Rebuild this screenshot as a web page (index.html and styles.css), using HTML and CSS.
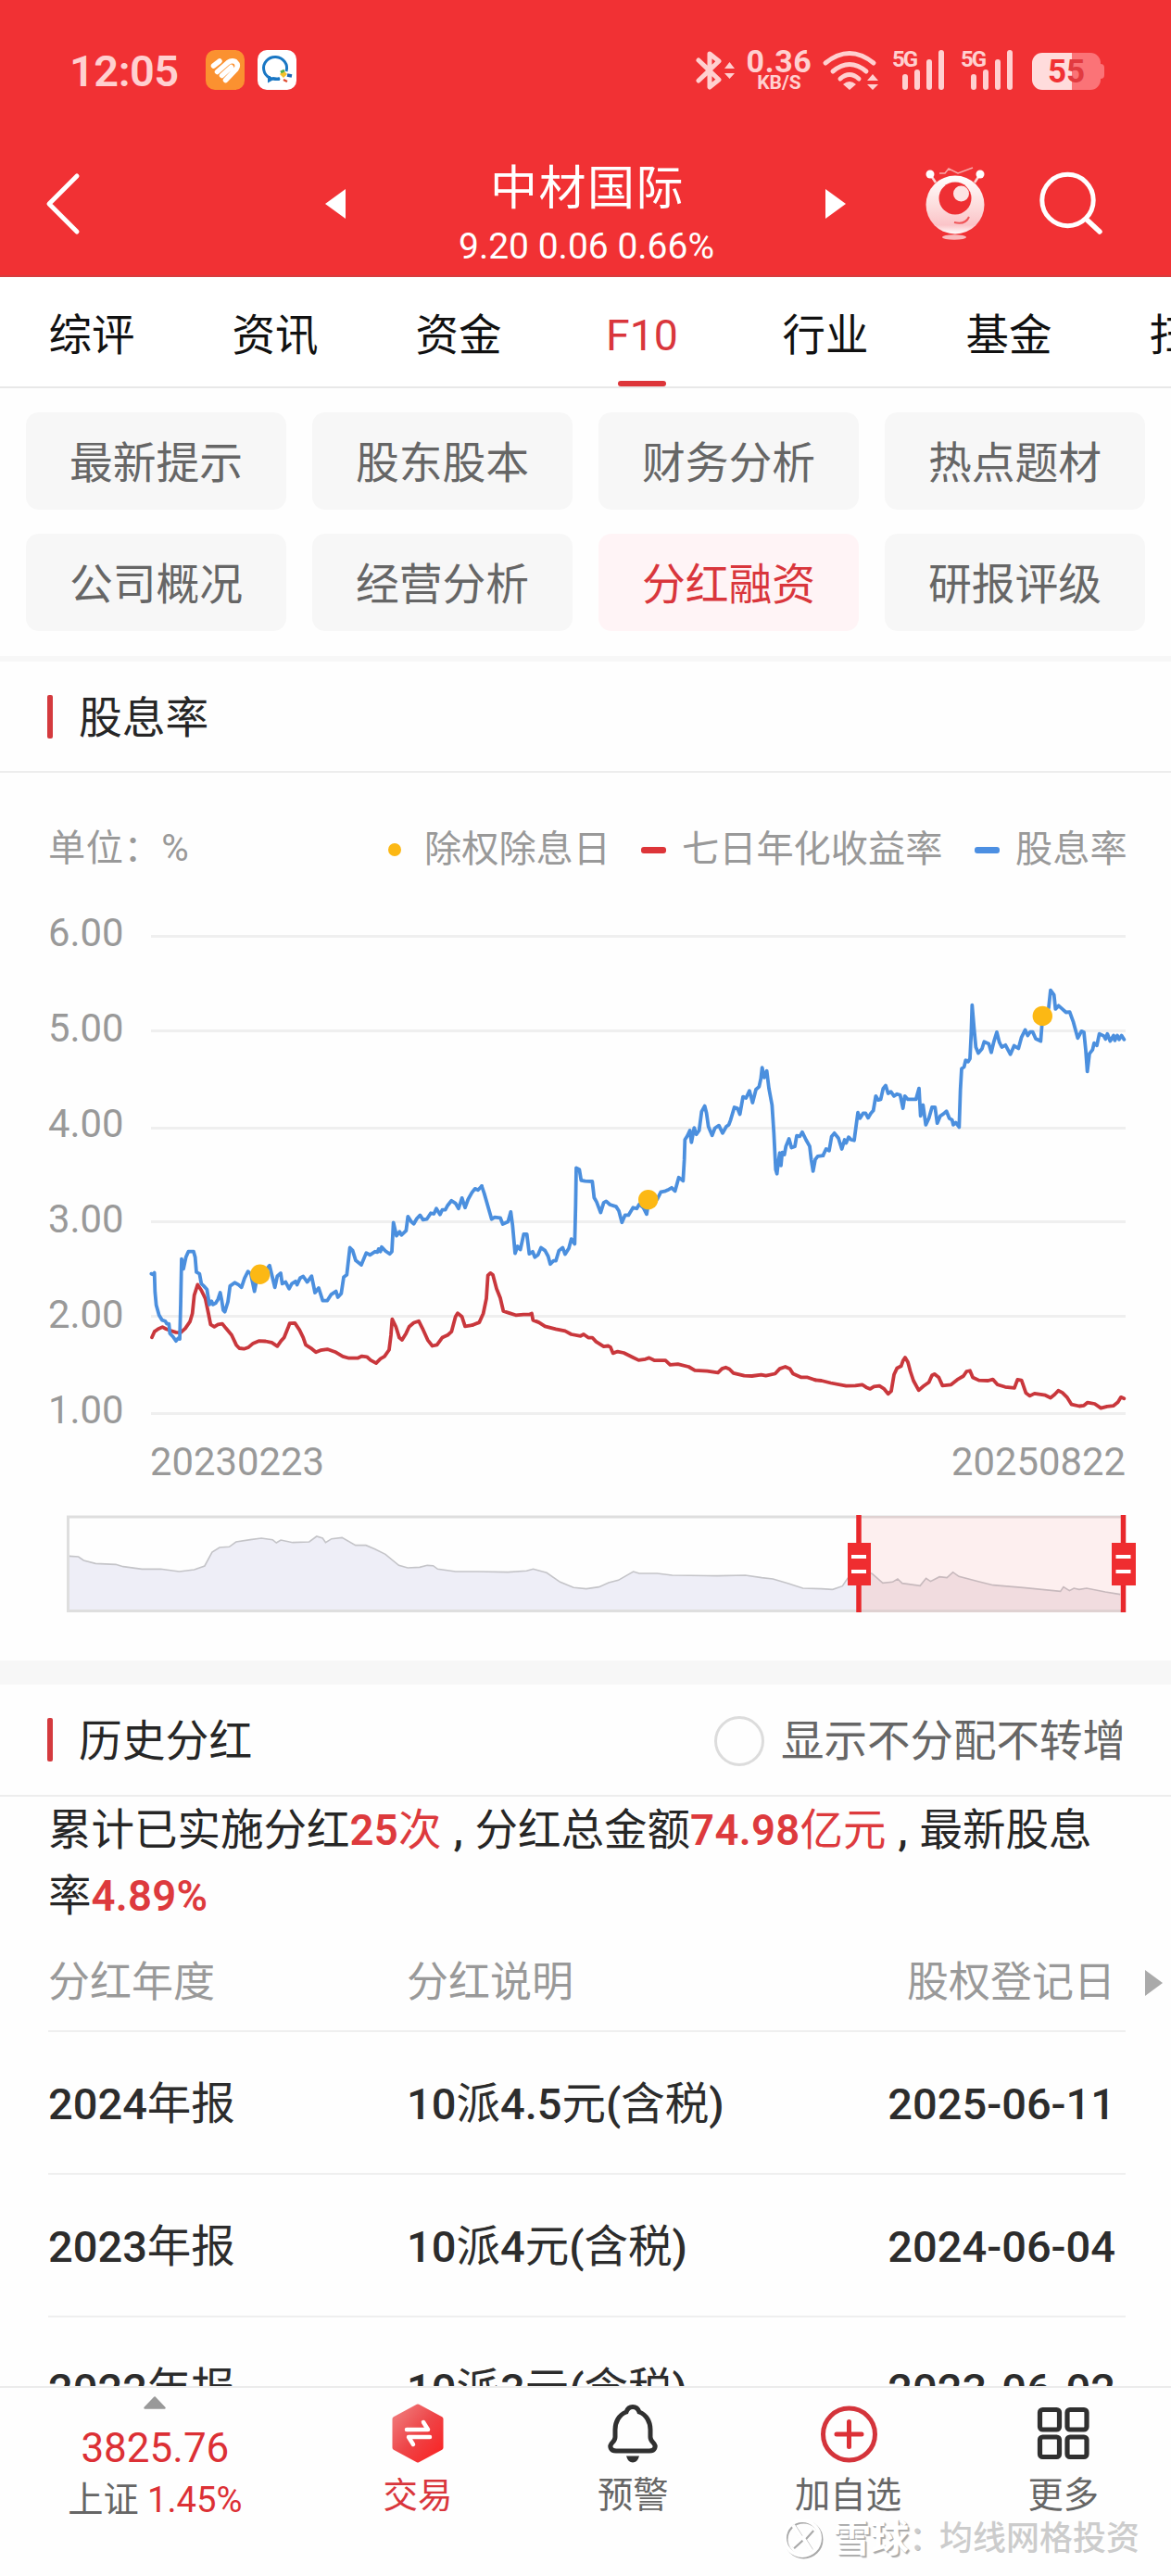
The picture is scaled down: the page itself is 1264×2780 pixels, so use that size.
FILE: index.html
```html
<!DOCTYPE html>
<html lang="zh-CN">
<head>
<meta charset="utf-8">
<title>中材国际 F10</title>
<link rel="stylesheet" href="styles.css">
</head>
<body>
<div class="screen">
  <header class="header">
    <div class="status">
      <span class="clock">12:05</span>
      <svg class="app-icon" viewBox="0 0 42 43"><rect width="42" height="43" rx="10" fill="#fb9130"/><g stroke="#fff" stroke-width="5.500" stroke-linecap="round" stroke-linejoin="round" fill="none"><path d="M8.500 17 15 12M12.500 23.500 24 13.500Q28 10.500 32 12.500 36 16 33 20.500L21.500 32.500M17.500 27.500 27.500 18.500"/></g></svg>
      <svg class="app-icon second" viewBox="0 0 42 43"><rect width="42" height="43" rx="10" fill="#fff"/><path d="M31 23A12.500 12 0 1 0 24 30.500M12.500 28V33L17 30.500 24 31.500" fill="none" stroke="#1a77c4" stroke-width="3"/><path d="M28 22l4 4-4 4-4-4z" fill="#f5c12b"/><path d="M32 27l5 1" stroke="#2167b5" stroke-width="3.500"/><path d="M25 24l4-2" stroke="#4cae4c" stroke-width="3"/><path d="M28 32l4 2" stroke="#dd4b30" stroke-width="2.500"/></svg>
      <svg class="bt" viewBox="0 0 46 44"><path d="M3 11 25 32 15 40V4L25 12 3 33" fill="none" stroke="#ffd0d0" stroke-width="5" stroke-linejoin="round" stroke-linecap="round"/><path d="M31 20 36.500 13 42 20ZM31 25H42L36.500 31Z" fill="#ffd0d0"/></svg>
      <span class="net"><b>0.36</b><small>KB/S</small></span>
      <svg class="wifi" viewBox="0 0 60 44"><g fill="none" stroke="#ffd0d0" stroke-width="5" stroke-linecap="round"><path d="M3 14Q29-7 55 14M11 23Q29 8 47 23M19 31Q29 22 39 31"/></g><path d="M22 37Q29 31 36 37L29 43ZM48 33 54 26 60 33ZM48 37H60L54 43Z" fill="#ffd0d0"/></svg>
      <span class="signal"><em>5G</em><svg viewBox="0 0 46 43"><path d="M3 29V40M16 24V40M29 13V40M42 3V40" stroke="#ffd0d0" stroke-width="6" stroke-linecap="round"/></svg></span>
      <span class="signal"><em>5G</em><svg viewBox="0 0 46 43"><path d="M3 29V40M16 24V40M29 13V40M42 3V40" stroke="#ffd0d0" stroke-width="6" stroke-linecap="round"/></svg></span>
      <span class="battery"><span>5<i>5</i></span></span><span class="nub"></span>
    </div>
    <nav class="titlebar">
      <svg class="back" viewBox="0 0 40 70"><path d="M35 5 5 35 35 65" fill="none" stroke="#fff" stroke-width="5" stroke-linecap="round" stroke-linejoin="round"/></svg>
      <svg class="prev" viewBox="0 0 22 32"><path d="M22 0V32L0 16Z" fill="#fff"/></svg>
      <div class="stock"><h1>中材国际</h1><p>9.20 0.06 0.66%</p></div>
      <svg class="next" viewBox="0 0 22 32"><path d="M0 0V32L22 16Z" fill="#fff"/></svg>
      <svg class="robot" viewBox="0 0 64 80">
        <defs><linearGradient id="body" x1="0" y1="0" x2="0" y2="1"><stop offset="0" stop-color="#fff"/><stop offset=".5" stop-color="#fddede"/><stop offset=".85" stop-color="#fbc4c8"/><stop offset="1" stop-color="#fff"/></linearGradient></defs>
        <path d="M5 8 11 17M59 8 53 17" stroke="#fbd6d6" stroke-width="2.500"/><circle cx="5" cy="8" r="4.500" fill="#fff"/><circle cx="59" cy="8" r="4.500" fill="#fff"/>
        <path d="M15 7H21L25 2 35 7 51 1" fill="none" stroke="#f9a8a8" stroke-width="1.500"/>
        <circle cx="32" cy="41" r="31.500" fill="url(#body)"/><circle cx="32" cy="34" r="17.500" fill="#ee2f33"/><circle cx="38.500" cy="29" r="8.500" fill="#fde3e3"/>
        <path d="M31 60Q43 63 47 54" fill="none" stroke="#ef5558" stroke-width="2"/><ellipse cx="31" cy="76" rx="13" ry="2.800" fill="#f9b9bb"/>
      </svg>
      <svg class="search" viewBox="0 0 70 70"><circle cx="31.500" cy="31" r="27.700" fill="none" stroke="#fff" stroke-width="5"/><path d="M52 52 66 65" stroke="#fff" stroke-width="5.500" stroke-linecap="round"/></svg>
    </nav>
  </header>

  <nav class="tabs">
    <a>综评</a><a>资讯</a><a>资金</a><a class="active">F10</a><a>行业</a><a>基金</a><a>扫雷</a>
  </nav>

  <section class="chips">
    <a>最新提示</a><a>股东股本</a><a>财务分析</a><a>热点题材</a>
    <a>公司概况</a><a>经营分析</a><a class="on">分红融资</a><a>研报评级</a>
  </section>

  <section class="yield">
    <h2 class="section-title"><span>股息率</span></h2>
    <div class="legend">
      <span class="unit">单位：%</span>
      <span class="key ex"><i></i>除权除息日</span>
      <span class="key seven"><i></i>七日年化收益率</span>
      <span class="key rate"><i></i>股息率</span>
    </div>
    <svg class="chart" viewBox="0 960 1264 832">
      <path class="grid" d="M163 1010.500H1215M163 1112.500H1215M163 1217.500H1215M163 1318.500H1215M163 1420.500H1215M163 1525.500H1215"/>
      <g class="axis">
        <text x="52" y="1021">6.00</text><text x="52" y="1124">5.00</text><text x="52" y="1227">4.00</text><text x="52" y="1330">3.00</text><text x="52" y="1433">2.00</text><text x="52" y="1536">1.00</text>
        <text x="162" y="1592">20230223</text><text x="1215" y="1592" text-anchor="end">20250822</text>
      </g>
      <g transform="translate(140 980) scale(.33333 .35714)">
        <polyline class="line red" points="72 1297 80 1280 92 1272 106 1266 118 1272 130 1276 150 1282 165 1283 180 1270 195 1250 203 1225 209 1170 220 1138 232 1155 245 1180 255 1225 262 1258 274 1265 286 1258 300 1256 312 1270 330 1290 345 1320 355 1330 370 1332 385 1327 400 1315 418 1308 440 1309 460 1313 478 1324 490 1308 500 1298 512 1270 518 1255 535 1254 550 1275 562 1298 570 1320 590 1332 603 1342 618 1336 640 1333 665 1341 690 1355 710 1360 738 1360 752 1354 768 1356 780 1366 798 1375 812 1362 825 1355 840 1335 846 1290 850 1242 862 1265 873 1298 882 1305 895 1285 905 1265 920 1253 936 1248 948 1270 965 1305 980 1323 995 1320 1012 1298 1030 1290 1042 1280 1055 1235 1062 1224 1076 1235 1086 1264 1110 1260"/>
        <polyline class="line blue" points="70 1105 76 1107 80 1102 82 1160 86 1200 95 1230 105 1245 115 1248 120 1256 127 1256 130 1285 140 1295 150 1308 157 1300 162 1302 165 1200 168 1060 174 1090 182 1055 190 1038 207 1038 212 1055 216 1100 226 1105 232 1135 240 1142 250 1152 258 1198 265 1188 270 1198 278 1194 286 1182 293 1162 298 1185 303 1215 308 1220 318 1190 325 1142 340 1132 352 1138 362 1146 372 1118 383 1098 392 1105 404 1158 412 1120 422 1105 440 1095 453 1080 462 1115 470 1146 478 1112 489 1103 494 1135 505 1130 516 1150 525 1135 537 1128 542 1138 552 1118 562 1113 575 1130 589 1112 600 1162 612 1148 625 1186 640 1186 652 1168 668 1158 674 1176 685 1165 693 1115 703 1108 713 1026 722 1035 732 1065 750 1078 766 1042 778 1048 795 1038 802 1040 806 1030 812 1038 816 1024 828 1036 842 1045 849 1038 854 950 864 990 874 978 880 988 895 975 901 932 912 948 920 954 930 938 940 928 950 942 962 940 975 922 985 924 993 908 1005 926 1012 912 1022 912 1030 898 1042 884 1055 892 1065 908 1076 876 1086 905 1096 880 1108 860 1118 848 1128 852 1140 840"/>
      </g>
      <g transform="translate(510 980) scale(.33333 .35714)">
        <polyline class="line red" points="0 1260 22 1252 35 1225 45 1180 50 1110 58 1103 66 1108 78 1150 90 1178 100 1218 120 1224 140 1230 165 1228 185 1228 192 1225 196 1245 215 1252 235 1264 270 1272 300 1278 320 1288 350 1293 360 1288 375 1298 388 1298 400 1310 425 1325 440 1323 447 1327 455 1345 470 1340 490 1344 520 1358 538 1366 560 1363 572 1359 590 1367 625 1367 640 1380 665 1378 700 1386 720 1397 760 1399 795 1404 808 1392 820 1388 832 1393 845 1405 880 1413 905 1414 935 1410 950 1413 980 1407 995 1392 1013 1386 1028 1392 1038 1407 1065 1418 1085 1418 1110 1426"/>
        <polyline class="line blue" points="30 840 38 862 62 940 72 934 90 936 98 955 115 948 124 918 130 960 138 1043 146 1022 155 1032 166 985 176 985 184 1045 195 1038 202 1055 212 1048 222 1026 235 1035 245 1052 252 1076 262 1066 270 1066 280 1035 292 1026 300 1046 312 1028 320 1000 331 1015 334 900 336 785 346 790 352 823 365 825 388 826 394 875 402 888 415 920 425 890 433 886 445 896 465 902 474 915 484 950 494 928 505 928 520 905 532 908 540 895 553 905 564 925 570 890 598 880 610 858 622 856 632 852 645 845 656 855 668 814 682 824 686 760 688 700 696 688 704 672 709 708 718 664 725 684 734 672 742 615 752 598 758 620 764 660 776 687 785 665 798 657 810 680 822 660 830 655 836 640 848 602 858 605 866 623 876 570 886 574 897 552 907 588 918 548 928 540 934 515 938 482 945 512 953 492 960 545 970 595 976 680 982 790 986 803 990 770 995 740 999 778 1003 738 1010 745 1015 720 1025 697 1033 724 1044 720 1050 688 1060 690 1068 677 1080 700 1092 720 1097 760 1103 795 1110 760 1118 750 1135 748"/>
      </g>
      <g transform="translate(880 980) scale(.33333 .35714)">
        <polyline class="line red" points="0 1426 20 1428 50 1435 100 1444 130 1443 152 1440 165 1448 178 1453 190 1446 208 1444 222 1452 236 1468 246 1460 255 1410 265 1390 278 1384 284 1368 291 1358 300 1372 308 1400 318 1428 335 1457 350 1445 368 1433 378 1412 386 1408 400 1418 412 1443 440 1440 460 1425 480 1414 490 1400 501 1398 510 1418 530 1427 560 1428 575 1424 590 1440 615 1447 645 1450 655 1425 668 1427 682 1465 695 1474 710 1467 745 1472 762 1480 775 1470 787 1458 800 1464 815 1478 830 1500 855 1505 870 1503 882 1494 905 1498 925 1511 945 1506 965 1504 980 1493 990 1478 1000 1482"/>
        <polyline class="line blue" points="25 748 35 728 45 733 53 690 62 680 75 695 86 728 95 700 100 710 108 692 116 700 126 702 132 660 138 618 145 635 155 620 163 620 171 634 180 620 188 612 196 568 204 580 212 578 220 545 228 536 236 560 245 555 255 568 265 562 275 565 284 605 290 568 300 578 312 578 326 578 336 545 341 628 349 595 358 655 368 635 378 602 388 602 395 650 405 628 415 622 425 614 434 635 443 640 447 655 455 648 466 662 470 550 474 485 482 480 487 460 495 464 501 455 505 380 508 293 514 360 520 420 528 438 540 425 547 404 562 410 570 436 578 405 588 375 596 405 604 420 616 414 632 442 644 416 658 424 668 390 680 368 688 385 696 374 704 374 714 395 730 402 736 330 750 320 756 300 762 248 773 262 778 305 788 295 800 305 812 315 824 314 836 345 850 393 862 372 870 375 876 430 881 494 888 440 898 428 903 408 912 415 920 380 934 386 940 396 946 380 955 402 966 385 970 400 978 385 984 397 992 385 1000 397"/>
      </g>
      <g fill="#fcb814"><circle cx="280.700" cy="1375.300" r="10.700"/><circle cx="699.700" cy="1294.600" r="10.700"/><circle cx="1125.300" cy="1096.400" r="10.700"/></g>
      <g transform="translate(0 1480) scale(.80613 .33333)">
        <path fill="#eeeef7" d="M93 598 105 600 112 612 128 622 155 625 165 632 190 640 215 640 240 648 260 642 274 630 284 585 294 570 307 568 316 552 335 545 350 540 365 545 370 555 376 546 392 554 414 552 424 534 432 540 436 554 444 542 458 538 476 563 490 563 502 575 516 592 534 628 546 636 562 634 572 628 580 629 586 640 610 648 640 648 680 650 705 646 714 640 732 652 750 682 768 700 785 704 802 698 815 684 828 676 848 648 856 654 880 654 900 660 960 662 998 660 1020 668 1035 672 1055 686 1075 702 1100 704 1115 706 1128 695 1135 670 1150 640V776H93Z"/>
        <path fill="#f1eaed" d="M1150 640 1168 655 1182 685 1195 682 1202 672 1208 686 1232 694 1240 670 1246 680 1258 665 1268 668 1276 650 1284 664 1310 680 1330 692 1370 700 1420 712 1424 698 1432 710 1438 702 1445 706 1455 702 1480 714 1500 722V776H1150Z"/>
        <polyline class="shadow-line" points="93 598 105 600 112 612 128 622 155 625 165 632 190 640 215 640 240 648 260 642 274 630 284 585 294 570 307 568 316 552 335 545 350 540 365 545 370 555 376 546 392 554 414 552 424 534 432 540 436 554 444 542 458 538 476 563 490 563 502 575 516 592 534 628 546 636 562 634 572 628 580 629 586 640 610 648 640 648 680 650 705 646 714 640 732 652 750 682 768 700 785 704 802 698 815 684 828 676 848 648 856 654 880 654 900 660 960 662 998 660 1020 668 1035 672 1055 686 1075 702 1100 704 1115 706 1128 695 1135 670 1150 640 1168 655 1182 685 1195 682 1202 672 1208 686 1232 694 1240 670 1246 680 1258 665 1268 668 1276 650 1284 664 1310 680 1330 692 1370 700 1420 712 1424 698 1432 710 1438 702 1445 706 1455 702 1480 714 1500 722"/>
      </g>
      <rect x="73.500" y="1637" width="1139" height="101.500" fill="none" stroke="#dedede" stroke-width="3"/>
      <rect x="927" y="1636" width="286" height="104" fill="#ee2f33" fill-opacity=".075"/>
      <path d="M927 1635V1740M1212.500 1635V1740" stroke="#e8282c" stroke-width="5.500"/>
      <path d="M915 1665H940V1711H915ZM1200 1665H1226V1711H1200Z" fill="#ef2d30"/>
      <path d="M919 1680H935M919 1696H935M1204.500 1680H1220.500M1204.500 1696H1220.500" stroke="#fff" stroke-width="4"/>
    </svg>
  </section>

  <section class="history">
    <h2 class="section-title"><span>历史分红</span><label><i></i>显示不分配不转增</label></h2>
    <p class="summary">累计已实施分红<b>25</b><em>次</em><i>,</i>分红总金额<b>74.98</b><em>亿元</em><i>,</i>最新股息率<b>4.89%</b></p>
    <div class="table">
      <div class="tr th"><span>分红年度</span><span>分红说明</span><span>股权登记日</span><svg viewBox="0 0 19 28"><path d="M0 0V28L19 14Z" fill="#aaa"/></svg></div>
      <div class="tr"><span>2024<s>年报</s></span><span>10<s>派</s>4.5<s>元</s>(<s>含税</s>)</span><span>2025-06-11</span></div>
      <div class="tr"><span>2023<s>年报</s></span><span>10<s>派</s>4<s>元</s>(<s>含税</s>)</span><span>2024-06-04</span></div>
      <div class="tr"><span>2022<s>年报</s></span><span>10<s>派</s>3<s>元</s>(<s>含税</s>)</span><span>2023-06-02</span></div>
    </div>
  </section>

  <footer class="toolbar">
    <div class="index">
      <svg viewBox="0 0 24 14"><path d="M12 1.500 22.500 12.500H1.500Z" fill="#999" stroke="#999" stroke-width="2.500" stroke-linejoin="round"/></svg>
      <strong>3825.76</strong>
      <p>上证 <b>1.45%</b></p>
    </div>
    <a class="trade">
      <svg viewBox="0 0 64 64"><defs><linearGradient id="hex" x1="0" y1="0" x2="1" y2="1"><stop offset="0" stop-color="#f08080"/><stop offset=".5" stop-color="#ee4548"/><stop offset="1" stop-color="#fa2222"/></linearGradient></defs><path d="M32 3 57 16.500V47.500L32 61 7 47.500V16.500Z" fill="url(#hex)" stroke="url(#hex)" stroke-width="5" stroke-linejoin="round"/><path d="M20 28H43L38 20M45 36H22L27 44" fill="none" stroke="#fff" stroke-width="4.500" stroke-linecap="round" stroke-linejoin="round"/></svg>
      交易
    </a>
    <a>
      <svg viewBox="0 0 64 64"><path d="M32 3.500C28 3.500 26 6 25 9 17 12 13 20 13 28V36C13 39 12 40 10 42 6 46 8 51 14 51H50C56 51 58 46 54 42 52 40 51 39 51 36V28C51 20 47 12 39 9 38 6 36 3.500 32 3.500Z" fill="none" stroke="#303030" stroke-width="5"/><path d="M25 56.500H39Q37 63.500 32 63.500 27 63.500 25 56.500Z" fill="#303030"/></svg>
      预警
    </a>
    <a>
      <svg viewBox="0 0 64 64"><circle cx="32.500" cy="33" r="28" fill="none" stroke="#d4343b" stroke-width="5"/><path d="M32.500 19.500V46.500M19 33H46" stroke="#dc3036" stroke-width="5" stroke-linecap="round"/></svg>
      加自选
    </a>
    <a>
      <svg viewBox="0 0 64 64"><g fill="none" stroke="#303030" stroke-width="5.200"><rect x="6.500" y="6.500" width="21" height="21.500" rx="3"/><rect x="36" y="6.500" width="21" height="21.500" rx="3"/><rect x="6.500" y="36" width="21" height="21.500" rx="3"/><rect x="36" y="36" width="21" height="21.500" rx="3"/></g></svg>
      更多
    </a>
    <div class="watermark">
      <svg viewBox="0 0 46 46"><g fill="none" stroke-width="4"><g stroke="#a8a8a8" transform="translate(1.500 1.500)"><circle cx="22" cy="22" r="19"/><path d="M12 8 21 22 11 31M32 12 23 22 32 36"/></g><g stroke="#fff"><circle cx="22" cy="22" r="19"/><path d="M12 8 21 22 11 31M32 12 23 22 32 36"/></g></g></svg>
      <b>雪球</b><i>：</i><span>均线网格投资</span>
    </div>
  </footer>
</div>
</body>
</html>
```

FILE: styles.css
```css
* { box-sizing: border-box; margin: 0; padding: 0; }
body { background: #fff; font-family: Roboto, "Noto Sans CJK SC", sans-serif; }
i, em { font-style: normal; }
.screen { width: 1264px; height: 2780px; overflow: hidden; display: flex; flex-direction: column; background: #fefefe; }
svg { display: block; flex: none; overflow: visible; }

.header { flex: none; height: 299px; background: #f13134; border-bottom: 2px solid #d63c3e; color: #fff; }
.status { height: 150px; padding: 54px 0 0 75px; display: flex; align-items: flex-start; color: #ffd0d0; }
.clock { width: 147px; font: 600 47px/46px Roboto, sans-serif; letter-spacing: -.5px; }
.app-icon { width: 42px; height: 43px; }
.app-icon.second { margin-left: 14px; }
.bt { width: 46px; height: 44px; margin-left: 431px; }
.net { width: 72px; margin: -2px 0 0 8px; display: flex; flex-direction: column; align-items: center; }
.net b { font: 700 34px/28px Roboto, sans-serif; letter-spacing: .6px; }
.net small { font: 700 21px/19px Roboto, sans-serif; }
.wifi { width: 60px; height: 44px; margin-left: 11px; }
.signal { width: 57px; height: 43px; margin-left: 15px; display: flex; }
.signal em { width: 11px; font: 700 24px/20px Roboto, sans-serif; letter-spacing: -2px; white-space: nowrap; }
.signal svg { width: 46px; height: 43px; }
.signal + .signal { margin-left: 17px; }
.battery { width: 74px; height: 40px; margin: 3px 0 0 20px; border-radius: 11px; background: linear-gradient(90deg, #ffdcdc 58%, #fb7377 58%); display: flex; justify-content: center; font: 700 35px/41px Roboto, sans-serif; color: #f13134; }
.battery i { color: #e23a40; }
.nub { width: 4px; height: 16px; margin-top: 15px; border-radius: 0 4px 4px 0; background: #fb7377; }

.titlebar { height: 147px; display: flex; align-items: flex-start; }
.back { width: 40px; height: 70px; margin: 35px 0 0 48px; }
.prev { width: 22px; height: 32px; margin: 54px 0 0 263px; }
.stock { width: 518px; text-align: center; padding-top: 17px; }
.stock h1 { font-size: 51px; line-height: 74px; font-weight: 400; letter-spacing: 1.500px; padding-left: 4px; }
.stock p { font-size: 39px; line-height: 50px; padding-left: 2px; }
.next { width: 22px; height: 32px; margin-top: 54px; }
.robot { width: 64px; height: 80px; margin: 30px 0 0 86px; }
.search { width: 70px; height: 70px; margin: 35px 0 0 58px; }

.tabs { flex: none; height: 120px; display: flex; border-bottom: 2px solid #e8e8e8; overflow: hidden; background: #fff; }
.tabs a { flex: 0 0 198px; display: flex; flex-direction: column; align-items: center; font-size: 46.500px; line-height: 126px; color: #111; }
.tabs .active { color: #d9363c; }
.tabs .active::after { content: ""; width: 52px; height: 6px; margin-top: -14px; border-radius: 3px; background: #dd3539; }

.chips { flex: none; height: 289px; padding: 26px 28px 0; display: grid; grid-template-columns: repeat(4, 281px); grid-auto-rows: 105px; gap: 26px 28px; }
.chips a { display: flex; align-items: center; justify-content: center; background: #f7f7f7; border-radius: 14px; color: #666; font-size: 46.800px; line-height: 70px; padding-top: 5px; }
.chips .on { background: #fff4f6; color: #d9363c; }

.section-title { height: 120px; padding: 0 49px 0 51px; display: flex; align-items: center; border-bottom: 2px solid #ededed; font-size: 46.800px; line-height: 70px; font-weight: 400; color: #262626; }
.section-title::before { content: ""; width: 6px; height: 47px; border-radius: 2px; background: #d43a3e; margin-right: 28px; }
.section-title span { padding-top: 3px; }
.section-title label { margin-left: auto; display: flex; align-items: center; color: #666; font-size: 46.500px; padding-top: 2px; }
.section-title label i { width: 54px; height: 54px; border: 3px solid #dcdcdc; border-radius: 50%; margin-right: 18px; }
.yield { flex: none; height: 1084px; border-top: 6px solid #f7f7f7; }
.legend { height: 126px; padding: 42px 0 0 52px; display: flex; font-size: 40.200px; line-height: 80px; color: #999; }
.unit { width: 367px; letter-spacing: .6px; }
.key { display: flex; align-items: center; white-space: nowrap; height: 82px; }
.key i { width: 27px; height: 7px; border-radius: 3px; margin-right: 17px; }
.ex { width: 273px; }
.ex i { width: 14px; height: 14px; border-radius: 50%; margin-right: 25px; background: #fcb814; }
.seven { width: 360px; }
.seven i { background: #dd3539; }
.rate i { background: #4c8fe2; }
.chart { width: 1264px; height: 832px; }
.grid { stroke: #efefef; stroke-width: 3; }
.axis { font: 41.800px Roboto, sans-serif; fill: #999; }
.line { fill: none; stroke-width: 3.800; stroke-linejoin: round; stroke-linecap: round; vector-effect: non-scaling-stroke; }
.red { stroke: #c9373c; }
.blue { stroke: #4b8fde; }
.shadow-line { fill: none; stroke: #c4c4c8; stroke-width: 1.600; vector-effect: non-scaling-stroke; }

.history { flex: none; height: 783px; overflow: hidden; border-top: 26px solid #f7f7f7; }
.history .section-title { height: 121px; }
.summary { height: 146px; padding: 1px 0 0 52px; width: 1200px; font-size: 46.500px; line-height: 71px; color: #262626; word-break: break-all; }
.summary b { font-weight: 600; font-size: 45.500px; color: #dd3a3d; letter-spacing: .3px; }
.summary em { color: #dd3a3d; }
.summary i { display: inline-block; width: 36px; text-align: center; font-weight: 500; }
.table { margin: 0 49px 0 52px; }
.tr { height: 154px; padding-top: 4px; display: grid; grid-template-columns: 387px 340px 1fr; align-items: center; border-bottom: 2px solid #efefef; font-size: 47px; line-height: 70px; font-weight: 500; color: #2c2c2c; white-space: nowrap; }
.tr span:nth-child(3) { text-align: right; padding-right: 11px; }
.tr s { text-decoration: none; font-weight: 400; font-size: 47.500px; }
.th { height: 108px; grid-template-columns: 387px 340px 1fr 0; font-size: 45px; font-weight: 400; color: #999; }
.th svg { width: 19px; height: 28px; margin-left: 21px; }

.toolbar { position: relative; flex: 1; border-top: 2px solid #ececec; background: #fefefe; display: flex; }
.index { width: 335px; display: flex; flex-direction: column; align-items: center; color: #666; }
.index svg { width: 24px; height: 14px; margin-top: 9px; }
.index strong { font-size: 44px; line-height: 54px; margin-top: 15px; font-weight: 400; color: #dc3035; }
.index p { font-size: 38.200px; line-height: 54px; margin-top: 2px; }
.index b { font-weight: 400; color: #dc3035; }
.toolbar a { width: 232.500px; display: flex; flex-direction: column; align-items: center; font-size: 38.300px; line-height: 56px; color: #666; gap: 7px; }
.toolbar a svg { width: 64px; height: 64px; margin-top: 17px; }
.toolbar .trade { color: #d9363c; font-size: 37.500px; }
/* author stamp over the lower right corner */
.watermark { position: absolute; left: 844px; top: 138px; display: flex; align-items: center; color: #ccc; font-size: 36px; line-height: 50px; white-space: nowrap; }
.watermark svg { width: 46px; height: 46px; margin-right: 9px; }
.watermark b { font-size: 41px; font-weight: 700; color: #fff; text-shadow: 2px 2px 1px #aaa, 1px 1px 0 #bbb; }
.watermark i { width: 33px; text-shadow: 1px 1px 0 #bbb; }
.watermark span { font-weight: 500; }
```
